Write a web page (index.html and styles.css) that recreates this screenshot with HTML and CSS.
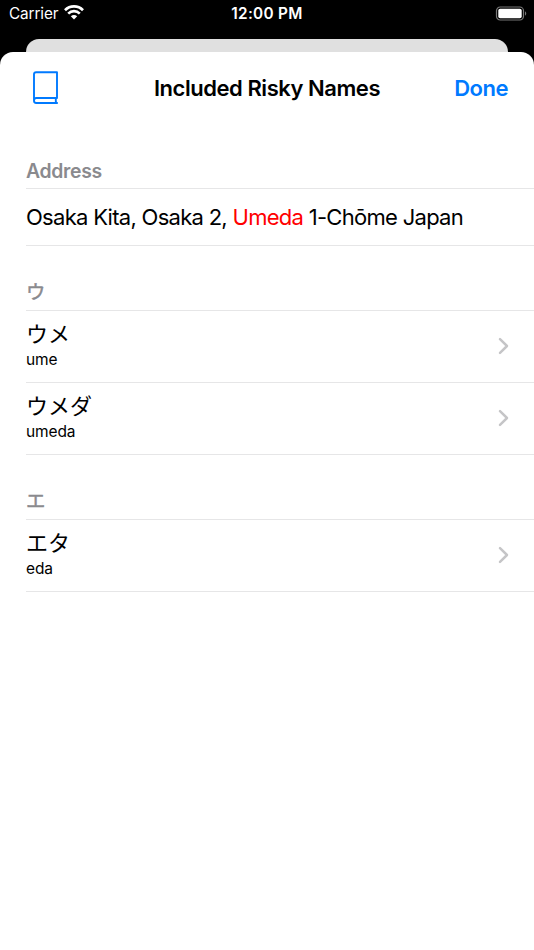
FILE: index.html
```html
<!DOCTYPE html>
<html lang="en">
<head>
<meta charset="utf-8">
<title>Included Risky Names</title>
<link rel="stylesheet" href="styles.css">
</head>
<body>
<header class="status">
  <div class="carrier"><span class="carrier-name">Carrier</span>
    <svg class="wifi" width="20" height="15" viewBox="0 0 20 15" fill="none" stroke="#fff" stroke-width="2.7"><path d="M1 5.2C6 .2 14 .2 19 5.2M4.2 8.6c3.3-3.2 8.3-3.2 11.6 0"/><path fill="#fff" stroke="none" d="M6.8 11.3c2-1.8 4.4-1.8 6.4 0L10 14.6z"/></svg>
  </div>
  <span class="clock">12:00 PM</span>
  <svg class="battery" width="32" height="16" viewBox="0 0 32 16"><rect x="1.5" y="1" width="27" height="13" rx="3.7" fill="none" stroke="#777" stroke-width="1.2"/><rect x="3.3" y="2.8" width="23.4" height="9.4" rx="1.8" fill="#fff"/><path d="M30 5.3c1.7.7 1.7 3.7 0 4.4z" fill="#777"/></svg>
</header>
<div class="back-sheet"></div>
<main class="sheet">
  <nav class="navbar">
    <svg class="book" width="27" height="34" viewBox="0 0 27 34" fill="none" stroke="#007aff" stroke-width="1.9" stroke-linejoin="round"><path d="M25.8 32H4.2Q2 32 2 29.8V3.3Q2 1.2 4.1 1.2H25V27H4.2Q2 27 2 29.5M23.8 27v3.2q0 1.8 2 1.8"/></svg>
    <h1 class="title">Included Risky Names</h1>
    <span class="done">Done</span>
  </nav>
  <section class="section">
    <h2 class="heading">Address</h2>
    <p class="address">Osaka Kita, Osaka 2, <span class="risky">Umeda</span> 1-Chōme Japan</p>
  </section>
  <section class="section">
    <h2 class="heading kana">ウ</h2>
    <div class="row"><div class="labels"><div class="name">ウメ</div><div class="reading">ume</div></div><svg class="chevron" width="12" height="18" viewBox="0 0 12 18"><path d="M3 2.2L10 9l-7 6.8"/></svg></div>
    <div class="row"><div class="labels"><div class="name">ウメダ</div><div class="reading">umeda</div></div><svg class="chevron" width="12" height="18" viewBox="0 0 12 18"><path d="M3 2.2L10 9l-7 6.8"/></svg></div>
  </section>
  <section class="section">
    <h2 class="heading kana">エ</h2>
    <div class="row"><div class="labels"><div class="name">エタ</div><div class="reading">eda</div></div><svg class="chevron" width="12" height="18" viewBox="0 0 12 18"><path d="M3 2.2L10 9l-7 6.8"/></svg></div>
  </section>
</main>
</body>
</html>
```
FILE: styles.css
```css
* { box-sizing: border-box; }
body {
  margin: 0;
  height: 950px;
  display: flex;
  flex-direction: column;
  overflow: hidden;
  background: #000;
  color: #000;
  font-family: Inter, "Noto Sans CJK JP", sans-serif;
}
h1, h2, p { margin: 0; }
.status {
  height: 39px;
  padding: 4px 7px 0 9px;
  display: grid;
  grid-template-columns: 1fr auto 1fr;
  align-items: start;
  color: #fff;
  font-size: 15.3px;
  line-height: 20px;
}
.carrier { display: flex; gap: 6px; }
.carrier-name { letter-spacing: -.1px; }
.wifi { margin-top: 1px; }
.clock { font-weight: 600; letter-spacing: .3px; margin-left: -2px; }
.battery { justify-self: end; margin-top: 2px; }
.back-sheet {
  height: 13px;
  margin: 0 26px;
  border-radius: 13px 13px 0 0;
  background: #e0e0e0;
}
.sheet {
  flex: 1;
  border-radius: 13px 13px 0 0;
  background: #fff;
}
.navbar {
  height: 72px;
  padding: 0 26px 0 32px;
  display: grid;
  grid-template-columns: 1fr auto 1fr;
  align-items: center;
  font-size: 22px;
}
.title { font-size: 22px; font-weight: 600; letter-spacing: -.45px; margin-left: -6px; }
.done { justify-self: end; color: #007aff; font-weight: 600; letter-spacing: -.5px; }
.section { padding-left: 26px; }
.heading {
  height: 65px;
  padding-top: 35px;
  border-bottom: 1.5px solid #e6e6e7;
  color: #8a8a8e;
  font-size: 19.4px;
  line-height: 24px;
  font-weight: 600;
  letter-spacing: -.3px;
}
.kana { padding-top: 34px; font-weight: 400; -webkit-text-stroke: .45px #8a8a8e; }
.address {
  height: 57px;
  border-bottom: 1.5px solid #e6e6e7;
  font-size: 22px;
  line-height: 57px;
  letter-spacing: -.71px;
  white-space: nowrap;
}
.risky { color: #f00; }
.row {
  height: 72px;
  padding: 8px 25px 0 0;
  display: flex;
  justify-content: space-between;
  align-items: flex-start;
  border-bottom: 1.5px solid #e6e6e7;
}
.name { font-size: 22px; line-height: 30px; }
.reading { margin-top: 1px; font-size: 15.5px; line-height: 20px; letter-spacing: -.1px; }
.chevron { margin-top: 18px; fill: none; stroke: #c5c5c7; stroke-width: 2.5; stroke-linecap: round; stroke-linejoin: round; }
```
